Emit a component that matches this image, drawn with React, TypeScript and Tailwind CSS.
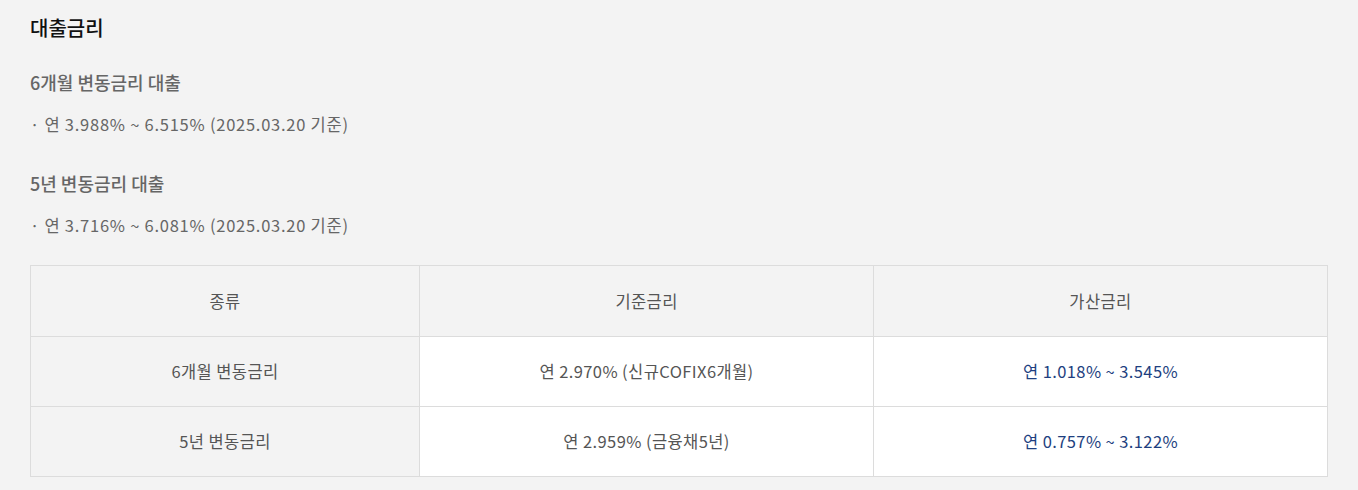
export default function App() {
  const rows = [
    { kind: "6개월 변동금리", base: "연 2.970% (신규COFIX6개월)", add: "연 1.018% ~ 3.545%" },
    { kind: "5년 변동금리", base: "연 2.959% (금융채5년)", add: "연 0.757% ~ 3.122%" },
  ];
  return (
    <div
      className="min-h-screen bg-[#f3f3f3] px-[30px] pt-[14px] pb-[12px]"
      style={{ fontFamily: '"Noto Sans CJK KR", "Noto Sans", sans-serif' }}
    >
      <h2 className="text-[20px] leading-[28px] font-medium text-[#111]">대출금리</h2>

      <h3 className="mt-[26px] text-[18px] leading-[28px] font-medium text-[#666]">6개월 변동금리 대출</h3>
      <p className="mt-[16px] text-[16.5px] leading-[24px] tracking-[0.75px] text-[#666]">· 연 3.988% ~ 6.515% (2025.03.20 기준)</p>

      <h3 className="mt-[33px] text-[18px] leading-[28px] font-medium text-[#666]">5년 변동금리 대출</h3>
      <p className="mt-[16px] text-[16.5px] leading-[24px] tracking-[0.75px] text-[#666]">· 연 3.716% ~ 6.081% (2025.03.20 기준)</p>

      <table className="mt-[28px] w-full border-collapse text-[16.5px] tracking-[0.4px] text-[#555]">
        <colgroup>
          <col className="w-[30%]" />
          <col className="w-[35%]" />
          <col className="w-[35%]" />
        </colgroup>
        <thead>
          <tr className="h-[71px] bg-[#f3f3f3]">
            <th className="border border-[#dcdcdc] font-normal">종류</th>
            <th className="border border-[#dcdcdc] font-normal">기준금리</th>
            <th className="border border-[#dcdcdc] font-normal">가산금리</th>
          </tr>
        </thead>
        <tbody>
          {rows.map((r) => (
            <tr key={r.kind} className="h-[70px]">
              <td className="border border-[#dcdcdc] bg-[#f3f3f3] text-center">{r.kind}</td>
              <td className="border border-[#dcdcdc] bg-white text-center">{r.base}</td>
              <td className="border border-[#dcdcdc] bg-white text-center text-[#1e3f80]">{r.add}</td>
            </tr>
          ))}
        </tbody>
      </table>
    </div>
  );
}
